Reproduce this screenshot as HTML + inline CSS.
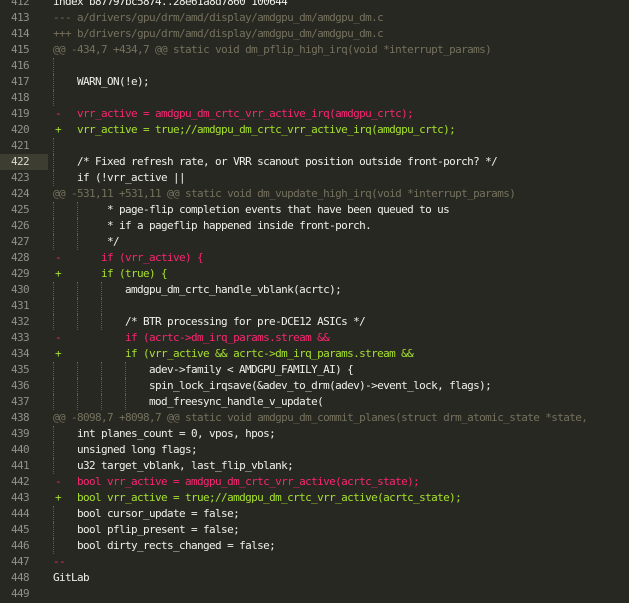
<!DOCTYPE html>
<html><head><meta charset="utf-8"><style>
html,body{margin:0;padding:0;background:#272822;width:629px;height:603px;overflow:hidden}
body{font-family:"DejaVu Sans Mono","Liberation Mono",monospace;font-size:11px;letter-spacing:-0.62px;color:#f0f0ea}
.wrap{position:absolute;top:-6px;left:0;width:629px}
.l{position:relative;height:16px;line-height:16px;white-space:pre}
.n{position:absolute;left:0;width:29px;text-align:right;color:#8f908a}
.hl{position:absolute;left:0;top:0;width:48px;height:16px;background:#3e3d32}
.hl+.n{color:#d8d8d0}
.c{position:absolute;left:53px;top:0}
i{display:inline-block;width:24px;height:16px;vertical-align:top;border-left:1px dotted #5c5d52;box-sizing:border-box}
b{display:inline-block;width:24px;font-weight:normal;padding-left:2px;box-sizing:border-box}
.g{color:#75715e}.r{color:#f92672}.p{color:#a6e22e}
</style></head><body><div class="wrap">
<div class="l"><span class="n">412</span><span class="c">index b87797bc5874..28e61a8d7860 100644</span></div>
<div class="l"><span class="n">413</span><span class="c g">--- a/drivers/gpu/drm/amd/display/amdgpu_dm/amdgpu_dm.c</span></div>
<div class="l"><span class="n">414</span><span class="c g">+++ b/drivers/gpu/drm/amd/display/amdgpu_dm/amdgpu_dm.c</span></div>
<div class="l"><span class="n">415</span><span class="c g">@@ -434,7 +434,7 @@ static void dm_pflip_high_irq(void *interrupt_params)</span></div>
<div class="l"><span class="n">416</span><span class="c"><i></i></span></div>
<div class="l"><span class="n">417</span><span class="c"><i></i>WARN_ON(!e);</span></div>
<div class="l"><span class="n">418</span><span class="c"><i></i></span></div>
<div class="l"><span class="n">419</span><span class="c r"><b>-</b>vrr_active = amdgpu_dm_crtc_vrr_active_irq(amdgpu_crtc);</span></div>
<div class="l"><span class="n">420</span><span class="c p"><b>+</b>vrr_active = true;//amdgpu_dm_crtc_vrr_active_irq(amdgpu_crtc);</span></div>
<div class="l"><span class="n">421</span><span class="c"><i></i></span></div>
<div class="l"><span class="hl"></span><span class="n">422</span><span class="c"><i></i>/* Fixed refresh rate, or VRR scanout position outside front-porch? */</span></div>
<div class="l"><span class="n">423</span><span class="c"><i></i>if (!vrr_active ||</span></div>
<div class="l"><span class="n">424</span><span class="c g">@@ -531,11 +531,11 @@ static void dm_vupdate_high_irq(void *interrupt_params)</span></div>
<div class="l"><span class="n">425</span><span class="c"><i></i><i></i> * page-flip completion events that have been queued to us</span></div>
<div class="l"><span class="n">426</span><span class="c"><i></i><i></i> * if a pageflip happened inside front-porch.</span></div>
<div class="l"><span class="n">427</span><span class="c"><i></i><i></i> */</span></div>
<div class="l"><span class="n">428</span><span class="c r"><b>-</b>    if (vrr_active) {</span></div>
<div class="l"><span class="n">429</span><span class="c p"><b>+</b>    if (true) {</span></div>
<div class="l"><span class="n">430</span><span class="c"><i></i><i></i><i></i>amdgpu_dm_crtc_handle_vblank(acrtc);</span></div>
<div class="l"><span class="n">431</span><span class="c"><i></i><i></i><i></i></span></div>
<div class="l"><span class="n">432</span><span class="c"><i></i><i></i><i></i>/* BTR processing for pre-DCE12 ASICs */</span></div>
<div class="l"><span class="n">433</span><span class="c r"><b>-</b>        if (acrtc-&gt;dm_irq_params.stream &amp;&amp;</span></div>
<div class="l"><span class="n">434</span><span class="c p"><b>+</b>        if (vrr_active &amp;&amp; acrtc-&gt;dm_irq_params.stream &amp;&amp;</span></div>
<div class="l"><span class="n">435</span><span class="c"><i></i><i></i><i></i><i></i>adev-&gt;family &lt; AMDGPU_FAMILY_AI) {</span></div>
<div class="l"><span class="n">436</span><span class="c"><i></i><i></i><i></i><i></i>spin_lock_irqsave(&amp;adev_to_drm(adev)-&gt;event_lock, flags);</span></div>
<div class="l"><span class="n">437</span><span class="c"><i></i><i></i><i></i><i></i>mod_freesync_handle_v_update(</span></div>
<div class="l"><span class="n">438</span><span class="c g">@@ -8098,7 +8098,7 @@ static void amdgpu_dm_commit_planes(struct drm_atomic_state *state,</span></div>
<div class="l"><span class="n">439</span><span class="c"><i></i>int planes_count = 0, vpos, hpos;</span></div>
<div class="l"><span class="n">440</span><span class="c"><i></i>unsigned long flags;</span></div>
<div class="l"><span class="n">441</span><span class="c"><i></i>u32 target_vblank, last_flip_vblank;</span></div>
<div class="l"><span class="n">442</span><span class="c r"><b>-</b>bool vrr_active = amdgpu_dm_crtc_vrr_active(acrtc_state);</span></div>
<div class="l"><span class="n">443</span><span class="c p"><b>+</b>bool vrr_active = true;//amdgpu_dm_crtc_vrr_active(acrtc_state);</span></div>
<div class="l"><span class="n">444</span><span class="c"><i></i>bool cursor_update = false;</span></div>
<div class="l"><span class="n">445</span><span class="c"><i></i>bool pflip_present = false;</span></div>
<div class="l"><span class="n">446</span><span class="c"><i></i>bool dirty_rects_changed = false;</span></div>
<div class="l"><span class="n">447</span><span class="c r">--</span></div>
<div class="l"><span class="n">448</span><span class="c">GitLab</span></div>
<div class="l"><span class="n">449</span><span class="c"></span></div>
</div></body></html>
